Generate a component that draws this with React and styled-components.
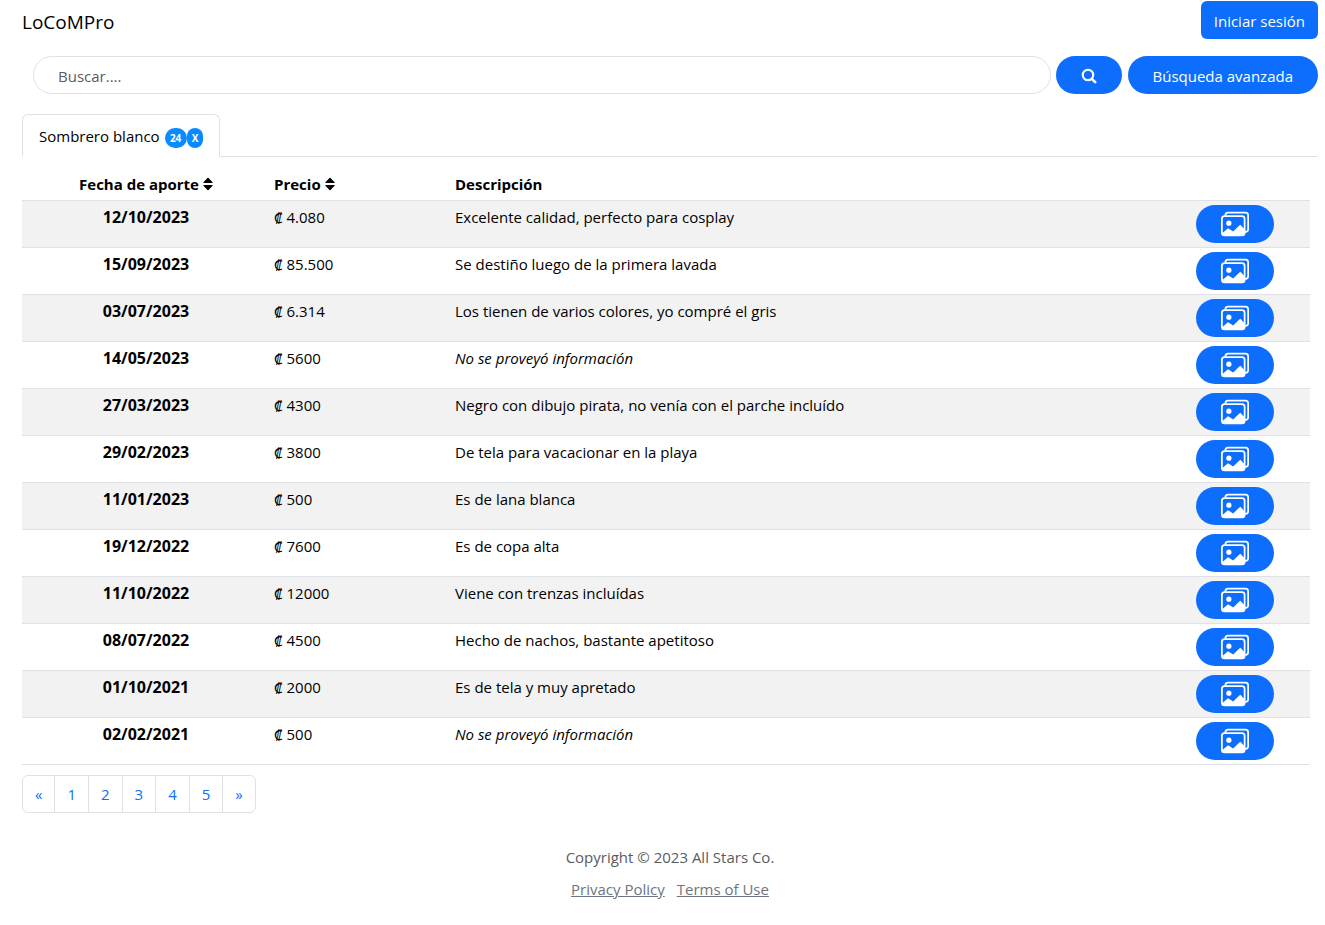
import React from "react";
import styled, { createGlobalStyle } from "styled-components";
import { BsImages } from "react-icons/bs";

const GlobalStyle = createGlobalStyle`
  *, *::before, *::after { box-sizing: border-box; }
  body {
    margin: 0;
    background: #fff;
    color: #000;
    font-family: "Open Sans", "Noto Sans", sans-serif;
    font-size: 15px;
    line-height: 24px;
  }
  button, input { font: inherit; }
`;

const Page = styled.div`
  padding: 1px 7px 0 22px;
`;

const Header = styled.header`
  display: flex;
  align-items: center;
  justify-content: space-between;
`;

const Brand = styled.a`
  padding-top: 3px;
  color: #000;
  font-size: 19px;
  line-height: 30px;
  text-decoration: none;
`;

const Button = styled.button`
  display: inline-flex;
  align-items: center;
  justify-content: center;
  height: 38px;
  padding: ${(p) => (p.$pill ? "2px 25px 0" : "2px 13px 0")};
  border: 0;
  border-radius: ${(p) => (p.$pill ? "20px" : "6px")};
  background: #0d6efd;
  color: #fff;
  white-space: nowrap;
  cursor: pointer;
`;

const SearchForm = styled.form`
  display: flex;
  margin: 17px 0 20px 11px;
`;

const SearchInput = styled.input`
  flex: 1;
  min-width: 0;
  height: 38px;
  margin-right: 5px;
  padding: 2px 24px 0;
  border: 1px solid #dee2e6;
  border-radius: 20px;
  background: #fff;
  color: #212529;

  &::placeholder {
    color: #595c5f;
    opacity: 1;
  }
`;

const SearchButton = styled(Button)`
  margin-right: 6px;
`;

const Tabs = styled.div`
  display: flex;
  border-bottom: 1px solid #dee2e6;
`;

const Tab = styled.div`
  display: flex;
  align-items: center;
  height: 43px;
  margin-bottom: -1px;
  padding: 0 16px;
  border: 1px solid #dee2e6;
  border-bottom-color: #fff;
  border-radius: 6px 6px 0 0;
  background: #fff;
`;

const TabLabel = styled.span`
  margin-right: 5px;
`;

const badge = `
  padding: 0 5px;
  border: 0;
  border-radius: 10px;
  background: #0a8aff;
  color: #fff;
  font-size: 10px;
  font-weight: 700;
  line-height: 20px;
  margin-top: 4px;
`;

const Badge = styled.span`
  ${badge}
  min-width: 22px;
  text-align: center;
`;

const CloseBadge = styled.button`
  ${badge}
  cursor: pointer;
`;

const Table = styled.table`
  width: calc(100% - 8px);
  margin-top: 11px;
  border-collapse: separate;
  border-spacing: 0;
  table-layout: fixed;

  th, td {
    padding: 4px;
    border-bottom: 1px solid #dee2e6;
    text-align: left;
    vertical-align: top;
  }

  tbody tr:nth-child(odd) > * { background: #f2f2f2; }

  tbody th { font-size: 16px; }

  th:first-child, td:last-child { text-align: center; }
`;

const Col = styled.col`
  width: ${(p) => p.$width};
`;

const SortButton = styled.button`
  display: inline-flex;
  align-items: center;
  gap: 4px;
  padding: 0;
  border: 0;
  background: none;
  color: inherit;
  font-weight: 700;
  cursor: pointer;
`;

const PhotoButton = styled(Button)`
  padding-top: 0;
  vertical-align: top;
`;

const Pagination = styled.nav`
  display: flex;
  margin-top: 10px;
`;

const PageLink = styled.a`
  padding: 6px 12px;
  border: 1px solid #dee2e6;
  color: #0d6efd;
  text-decoration: none;

  & + & { margin-left: -1px; }
  &:first-child { border-radius: 6px 0 0 6px; }
  &:last-child { border-radius: 0 6px 6px 0; }
`;

const Footer = styled.footer`
  display: flex;
  flex-direction: column;
  align-items: center;
  gap: 8px;
  margin-top: 32px;
  color: #595c5f;
`;

const FooterLinks = styled.div`
  display: flex;
  gap: 12px;
`;

const FooterLink = styled.a`
  color: #6c757d;
`;

const rows = [
  ["12/10/2023", "4.080", "Excelente calidad, perfecto para cosplay"],
  ["15/09/2023", "85.500", "Se destiño luego de la primera lavada"],
  ["03/07/2023", "6.314", "Los tienen de varios colores, yo compré el gris"],
  ["14/05/2023", "5600", null],
  ["27/03/2023", "4300", "Negro con dibujo pirata, no venía con el parche incluído"],
  ["29/02/2023", "3800", "De tela para vacacionar en la playa"],
  ["11/01/2023", "500", "Es de lana blanca"],
  ["19/12/2022", "7600", "Es de copa alta"],
  ["11/10/2022", "12000", "Viene con trenzas incluídas"],
  ["08/07/2022", "4500", "Hecho de nachos, bastante apetitoso"],
  ["01/10/2021", "2000", "Es de tela y muy apretado"],
  ["02/02/2021", "500", null],
];

const pages = ["«", "1", "2", "3", "4", "5", "»"];

const SortIcon = () => (
  <svg width="10" height="14" viewBox="0 0 10 14" fill="currentColor" aria-hidden="true">
    <path d="M5 .6 9.6 5.3Q10 6 9.2 6H.8Q0 6 .4 5.3ZM5 13.4.4 8.7Q0 8 .8 8H9.2Q10 8 9.6 8.7Z" />
  </svg>
);

const SearchIcon = () => (
  <svg width="16" height="16" viewBox="0 0 16 16" fill="none" stroke="currentColor" aria-hidden="true">
    <circle cx="7" cy="7" r="5.2" strokeWidth="2.2" />
    <path d="m10.8 10.8 3.4 3.4" strokeWidth="2.6" strokeLinecap="round" />
  </svg>
);

export default function App() {
  return (
    <>
      <GlobalStyle />
      <Page>
        <Header>
          <Brand href="#">LoCoMPro</Brand>
          <Button type="button">Iniciar sesión</Button>
        </Header>
        <SearchForm role="search" onSubmit={(e) => e.preventDefault()}>
          <SearchInput type="text" placeholder="Buscar...." aria-label="Buscar" />
          <SearchButton $pill type="submit" aria-label="Buscar">
            <SearchIcon />
          </SearchButton>
          <Button $pill type="button">Búsqueda avanzada</Button>
        </SearchForm>
        <Tabs>
          <Tab>
            <TabLabel>Sombrero blanco</TabLabel>
            <Badge>24</Badge>
            <CloseBadge type="button">X</CloseBadge>
          </Tab>
        </Tabs>
        <Table>
          <colgroup>
            <Col $width="248px" />
            <Col $width="181px" />
            <Col />
            <Col $width="150px" />
          </colgroup>
          <thead>
            <tr>
              <th scope="col">
                <SortButton type="button">Fecha de aporte <SortIcon /></SortButton>
              </th>
              <th scope="col">
                <SortButton type="button">Precio <SortIcon /></SortButton>
              </th>
              <th scope="col">Descripción</th>
              <th aria-label="Imágenes" />
            </tr>
          </thead>
          <tbody>
            {rows.map(([date, price, text]) => (
              <tr key={date}>
                <th scope="row">{date}</th>
                <td>₡ {price}</td>
                <td>{text || <em>No se proveyó información</em>}</td>
                <td>
                  <PhotoButton $pill type="button" aria-label="Ver imágenes">
                    <BsImages size={28} />
                  </PhotoButton>
                </td>
              </tr>
            ))}
          </tbody>
        </Table>
        <Pagination aria-label="Paginación">
          {pages.map((p) => (
            <PageLink key={p} href="#">{p}</PageLink>
          ))}
        </Pagination>
        <Footer>
          <div>Copyright © 2023 All Stars Co.</div>
          <FooterLinks>
            <FooterLink href="#">Privacy Policy</FooterLink>
            <FooterLink href="#">Terms of Use</FooterLink>
          </FooterLinks>
        </Footer>
      </Page>
    </>
  );
}
